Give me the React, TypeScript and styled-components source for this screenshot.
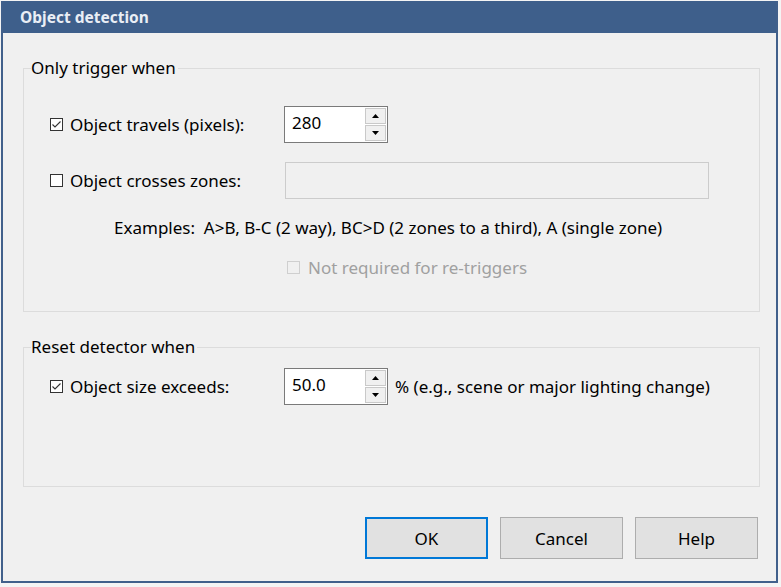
import React from "react";
import styled, { createGlobalStyle } from "styled-components";

const GlobalStyle = createGlobalStyle`
  html, body {
    margin: 0;
    padding: 0;
    background: #f4f4f4;
  }
  body {
    font-family: "Noto Sans", "Open Sans", sans-serif;
    font-size: 17px;
    color: #000;
  }
`;

const Window = styled.div`
  width: 773px;
  height: 580px;
  margin: 1px 0 0 1px;
  border: 2px solid #41608b;
  border-top: none;
  background: #f0f0f0;
  display: flex;
  flex-direction: column;
`;

const TitleBar = styled.div`
  height: 32px;
  background: #3e5f8b;
  color: #e9eef5;
  font-weight: 700;
  font-size: 15.5px;
  display: flex;
  align-items: center;
  padding-left: 17px;
`;

const Content = styled.div`
  flex: 1;
  display: flex;
  flex-direction: column;
  padding: 24px 16px 0 20px;
`;

const Group = styled.fieldset<{ $height: number }>`
  margin: 0;
  padding: 0 0 0 26px;
  border: 1px solid #dcdcdc;
  height: ${({ $height }) => $height}px;
  box-sizing: border-box;
  display: flex;
  flex-direction: column;
  & + & {
    margin-top: 24px;
  }
`;

const Legend = styled.legend`
  padding: 0 2px 0 0;
  font-size: 17px;
  line-height: 22px;
  margin-left: -19px;
`;

const Row = styled.div<{ $top: number }>`
  display: flex;
  align-items: center;
  margin-top: ${({ $top }) => $top}px;
  height: 37px;
`;

const LabelCol = styled.label`
  width: 234px;
  display: flex;
  align-items: center;
  gap: 7px;
`;

const Box = styled.span<{ $disabled?: boolean }>`
  width: 13px;
  height: 13px;
  box-sizing: border-box;
  border: 1px solid ${({ $disabled }) => ($disabled ? "#cfcfcf" : "#333")};
  background: ${({ $disabled }) => ($disabled ? "#f0f0f0" : "#fff")};
  display: flex;
  align-items: center;
  justify-content: center;
`;

const Text = styled.span<{ $muted?: boolean }>`
  color: ${({ $muted }) => ($muted ? "#a0a0a0" : "#000")};
  white-space: nowrap;
`;

const Spin = styled.div`
  width: 104px;
  height: 37px;
  box-sizing: border-box;
  border: 1px solid #7a7a7a;
  background: #fff;
  display: flex;
`;

const SpinValue = styled.div`
  flex: 1;
  padding: 4px 0 0 7px;
  font-size: 17px;
`;

const SpinButtons = styled.div`
  width: 21px;
  display: flex;
  flex-direction: column;
  gap: 1px;
  padding: 1px 1px 1px 0;
`;

const SpinButton = styled.div`
  flex: 1;
  background: #f0f0f0;
  border: 1px solid #c9c9c9;
  display: flex;
  align-items: center;
  justify-content: center;
`;

const ZoneField = styled.div`
  width: 424px;
  height: 37px;
  box-sizing: border-box;
  margin-left: 1px;
  border: 1px solid #cccccc;
  background: #f0f0f0;
`;

const Examples = styled.div`
  margin: 17px 0 0 64px;
  white-space: nowrap;
`;

const SubCheck = styled.label`
  margin: 17px 0 0 237px;
  display: flex;
  align-items: center;
  gap: 8px;
`;

const Suffix = styled.span`
  margin-left: 7px;
  white-space: nowrap;
`;

const Buttons = styled.div`
  display: flex;
  justify-content: flex-end;
  gap: 12px;
  margin-top: 30px;
  padding-right: 2px;
`;

const Button = styled.button<{ $default?: boolean }>`
  width: 123px;
  height: 42px;
  box-sizing: border-box;
  font-family: inherit;
  font-size: 17px;
  color: #000;
  background: #e1e1e1;
  border: ${({ $default }) => ($default ? "2px solid #0078d7" : "1px solid #adadad")};
  padding: 0;
`;

const Check = ({ on, disabled }: { on?: boolean; disabled?: boolean }) => (
  <Box $disabled={disabled}>
    {on && (
      <svg width="11" height="11" viewBox="0 0 11 11">
        <path d="M1.5 5.5 L4 8 L9.5 2.5" fill="none" stroke="#333" strokeWidth="1.1" />
      </svg>
    )}
  </Box>
);

const Arrow = ({ up }: { up?: boolean }) => (
  <svg width="7" height="4" viewBox="0 0 7 4">
    <path d={up ? "M0 4 L3.5 0 L7 4 Z" : "M0 0 L3.5 4 L7 0 Z"} fill="#000" />
  </svg>
);

const SpinBox = ({ value }: { value: string }) => (
  <Spin>
    <SpinValue>{value}</SpinValue>
    <SpinButtons>
      <SpinButton>
        <Arrow up />
      </SpinButton>
      <SpinButton>
        <Arrow />
      </SpinButton>
    </SpinButtons>
  </Spin>
);

export default function App() {
  return (
    <>
      <GlobalStyle />
      <Window>
        <TitleBar>Object detection</TitleBar>
        <Content>
          <Group $height={255}>
            <Legend>Only trigger when</Legend>
            <Row $top={27}>
              <LabelCol>
                <Check on />
                <Text>Object travels (pixels):</Text>
              </LabelCol>
              <SpinBox value="280" />
            </Row>
            <Row $top={19}>
              <LabelCol>
                <Check />
                <Text>Object crosses zones:</Text>
              </LabelCol>
              <ZoneField />
            </Row>
            <Examples>Examples:&nbsp; A&gt;B, B-C (2 way), BC&gt;D (2 zones to a third), A (single zone)</Examples>
            <SubCheck>
              <Check disabled />
              <Text $muted>Not required for re-triggers</Text>
            </SubCheck>
          </Group>
          <Group $height={151}>
            <Legend>Reset detector when</Legend>
            <Row $top={10}>
              <LabelCol>
                <Check on />
                <Text>Object size exceeds:</Text>
              </LabelCol>
              <SpinBox value="50.0" />
              <Suffix>% (e.g., scene or major lighting change)</Suffix>
            </Row>
          </Group>
          <Buttons>
            <Button $default>OK</Button>
            <Button>Cancel</Button>
            <Button>Help</Button>
          </Buttons>
        </Content>
      </Window>
    </>
  );
}
